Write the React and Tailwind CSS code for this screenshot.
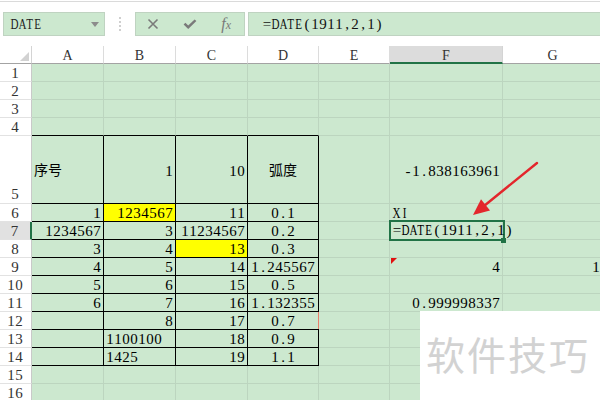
import React from 'react';

const SERIF = "font-['Liberation_Serif','Noto_Sans_CJK_SC',serif] text-[15px]";
const CJK = "font-['Noto_Sans_CJK_SC',sans-serif] text-[14px]";

const LETTERS = ['A', 'B', 'C', 'D', 'E', 'F', 'G'];

const DATA = {
  5: { 0: { t: '序号', a: 'l', cjk: true }, 1: { t: '1', a: 'r' }, 2: { t: '10', a: 'r' }, 3: { t: '弧度', a: 'c', cjk: true }, 5: { t: '-1.838163961', a: 'r' } },
  6: { 0: { t: '1', a: 'r' }, 1: { t: '1234567', a: 'r', y: true }, 2: { t: '11', a: 'r' }, 3: { t: '0.1', a: 'c' }, 5: { t: 'XI', a: 'l' } },
  7: { 0: { t: '1234567', a: 'r' }, 1: { t: '3', a: 'r' }, 2: { t: '11234567', a: 'r' }, 3: { t: '0.2', a: 'c' } },
  8: { 0: { t: '3', a: 'r' }, 1: { t: '4', a: 'r' }, 2: { t: '13', a: 'r', y: true }, 3: { t: '0.3', a: 'c' } },
  9: { 0: { t: '4', a: 'r' }, 1: { t: '5', a: 'r' }, 2: { t: '14', a: 'r' }, 3: { t: '1.245567', a: 'c' }, 5: { t: '4', a: 'r', tri: true }, 6: { t: '1', a: 'r' } },
  10: { 0: { t: '5', a: 'r' }, 1: { t: '6', a: 'r' }, 2: { t: '15', a: 'r' }, 3: { t: '0.5', a: 'c' } },
  11: { 0: { t: '6', a: 'r' }, 1: { t: '7', a: 'r' }, 2: { t: '16', a: 'r' }, 3: { t: '1.132355', a: 'c' }, 5: { t: '0.999998337', a: 'r' } },
  12: { 1: { t: '8', a: 'r' }, 2: { t: '17', a: 'r' }, 3: { t: '0.7', a: 'c', red: true } },
  13: { 1: { t: '1100100', a: 'l' }, 2: { t: '18', a: 'r' }, 3: { t: '0.9', a: 'c' } },
  14: { 1: { t: '1425', a: 'l' }, 2: { t: '19', a: 'r' }, 3: { t: '1.1', a: 'c' } },
};

const ALIGN = {
  l: 'text-left pl-[2px]',
  r: 'text-right pr-[2px]',
  c: 'text-center',
};

/* half-width fixed-pitch text, like the sheet's Song typeface */
function M({ t }) {
  return t.split('').map((ch, i) =>
    /[A-Z]/.test(ch) ? (
      <span key={i} className="inline-flex w-[8px] justify-center">
        <span className="scale-x-[0.74]">{ch}</span>
      </span>
    ) : (
      <span key={i} className="inline-flex w-[8px] justify-center">
        {ch}
      </span>
    )
  );
}

function RowHeader({ n }) {
  const tall = n === 5;
  const active = n === 7;
  return (
    <div
      className={`${tall ? 'h-[68px] pt-[50px]' : 'h-[18px] pt-[1px]'} ${active ? 'bg-[#e1e1e1] border-r-2 border-r-[#217346]' : 'bg-white border-r border-r-[#c9c9c9]'} border-b border-b-[#e2e2e2] text-center pr-[1px] leading-[17px] whitespace-nowrap text-[#333] ${SERIF}`}
    >
      <M t={String(n)} />
    </div>
  );
}

function Cell({ r, c }) {
  const d = (DATA[r] || {})[c];
  const tall = r === 5;
  const inTable = r >= 5 && r <= 14 && c <= 3;
  const topEdge = r === 4 && c <= 3;
  const rc = inTable ? 'border-r-black' : 'border-r-[#bcd5bf]';
  const bc = inTable || topEdge ? 'border-b-black' : 'border-b-[#bcd5bf]';
  const bg = d && d.y ? 'bg-[#ffff00]' : 'bg-[#cce8cf]';
  const pad = d && d.cjk ? 'pt-[25px]' : tall ? 'pt-[27px]' : 'pt-[1px]';
  return (
    <div
      className={`relative ${tall ? 'h-[68px]' : 'h-[18px]'} ${bg} border-r border-b ${rc} ${bc} ${pad} leading-[17px] whitespace-nowrap text-black ${d ? ALIGN[d.a] : ''} ${d && d.cjk ? CJK : SERIF}`}
    >
      {d ? d.cjk ? d.t : <M t={d.t} /> : null}
      {d && d.tri ? (
        <span className="absolute left-[1px] top-0 w-0 h-0 border-t-[6px] border-t-[#e01010] border-r-[6px] border-r-transparent" />
      ) : null}
      {d && d.red ? <span className="absolute right-[-2px] top-0 w-[2px] h-[17px] bg-[#e8806c]" /> : null}
    </div>
  );
}

export default function App() {
  const rows = Array.from({ length: 16 }, (_, i) => i + 1);
  return (
    <div className="relative w-[600px] h-[400px] overflow-hidden bg-white">
      {/* toolbar */}
      <div className="h-[45px] bg-white">
        <div className="h-[1px] mt-[1px] bg-[#dadada]" />
        <div className="flex mt-[10px] h-[24px]">
          <div className="ml-[3px] w-[102px] h-full bg-[#cce8cf] border border-[#bfd3c1] flex items-center justify-between pl-[6px] pr-[5px]">
            <span className={`${SERIF} text-[#222] leading-[17px] whitespace-nowrap`}>
              <M t="DATE" />
            </span>
            <svg width="8" height="5" viewBox="0 0 8 5">
              <path d="M0 0h8L4 5z" fill="#8c8c8c" />
            </svg>
          </div>
          <div className="ml-[14px] w-[2px] h-full flex flex-col justify-center gap-[2px]">
            <span className="block w-[2px] h-[2px] bg-[#cfcfcf]" />
            <span className="block w-[2px] h-[2px] bg-[#cfcfcf]" />
            <span className="block w-[2px] h-[2px] bg-[#cfcfcf]" />
            <span className="block w-[2px] h-[2px] bg-[#cfcfcf]" />
          </div>
          <div className="ml-[14px] w-[110px] h-full bg-[#cce8cf] border border-[#bfd3c1] flex items-center">
            <div className="w-[35px] flex justify-center">
              <svg width="12" height="12" viewBox="0 0 12 12">
                <path d="M1.5 1.5L10.5 10.5M10.5 1.5L1.5 10.5" stroke="#7a7a7a" strokeWidth="1.6" />
              </svg>
            </div>
            <div className="w-[38px] flex justify-center">
              <svg width="14" height="11" viewBox="0 0 14 11">
                <path d="M0.6 5.4L2.4 3.8L5.2 6.6L11.6 0.4L13.4 2.1L5.2 10Z" fill="#7a7a7a" />
              </svg>
            </div>
            <div className="w-[36px] flex justify-center items-baseline font-['Liberation_Serif',serif] italic text-[#7a7a7a]">
              <span className="text-[16px] leading-[16px]">f</span>
              <span className="text-[12px] leading-[16px]">x</span>
            </div>
          </div>
          <div className="ml-[3px] flex-1 h-full bg-[#cce8cf] border border-r-0 border-[#bfd3c1] flex items-center pl-[14px]">
            <span className={`${SERIF} text-[#111] leading-[17px] whitespace-nowrap`}>
              <M t="=DATE(1911,2,1)" />
            </span>
          </div>
        </div>
      </div>

      {/* column headers */}
      <div className="grid grid-cols-[32px_72px_72px_72px_71px_71px_113px_100px]">
        <div className="relative h-[18px] bg-white border-r border-r-[#d4d4d4] border-b border-b-[#a3a3a3]">
          <svg className="absolute right-[2px] bottom-[2px]" width="9" height="9" viewBox="0 0 9 9">
            <path d="M9 0V9H0Z" fill="#d2d2d2" />
          </svg>
        </div>
        {LETTERS.map((L) =>
          L === 'F' ? (
            <div
              key={L}
              className="h-[18px] bg-[#dcdcdc] border-r border-r-[#d4d4d4] border-b-2 border-b-[#217346] pt-[1px] text-center leading-[17px] text-[#333] font-['Liberation_Serif',serif] text-[14px]"
            >
              {L}
            </div>
          ) : (
            <div
              key={L}
              className="h-[18px] bg-white border-r border-r-[#dcdcdc] border-b border-b-[#a3a3a3] pt-[1px] text-center leading-[17px] text-[#333] font-['Liberation_Serif',serif] text-[14px]"
            >
              {L}
            </div>
          )
        )}

        {rows.map((r) => (
          <React.Fragment key={r}>
            <RowHeader n={r} />
            {LETTERS.map((L, c) => (
              <Cell key={L} r={r} c={c} />
            ))}
          </React.Fragment>
        ))}
      </div>

      {/* editing cell F7 */}
      <div className="absolute left-[389px] top-[220px] w-[116px] h-[21px] border-2 border-[#217346] z-10">
        <div className={`pl-[2px] pt-0 leading-[17px] whitespace-nowrap text-black ${SERIF}`}>
          <M t="=DATE(1911,2,1)" />
        </div>
        <span className="absolute right-[-3px] bottom-[-4px] w-[5px] h-[5px] bg-[#217346]" />
      </div>

      {/* red arrow */}
      <svg className="absolute inset-0 z-20 pointer-events-none" width="600" height="400" viewBox="0 0 600 400">
        <line x1="537" y1="163" x2="484" y2="206" stroke="#e3262c" strokeWidth="2.4" strokeLinecap="round" />
        <path d="M473 215L490 210.5L481 199.3Z" fill="#e3262c" />
      </svg>

      {/* watermark */}
      <div className="absolute left-[420px] top-[311px] w-[180px] h-[89px] bg-white z-10 pl-[6px] pt-[22px]">
        <span className="font-['Noto_Sans_CJK_SC',sans-serif] text-[39px] leading-[40px] tracking-[2px] text-[#d2d2d2] whitespace-nowrap">
          软件技巧
        </span>
      </div>
    </div>
  );
}
